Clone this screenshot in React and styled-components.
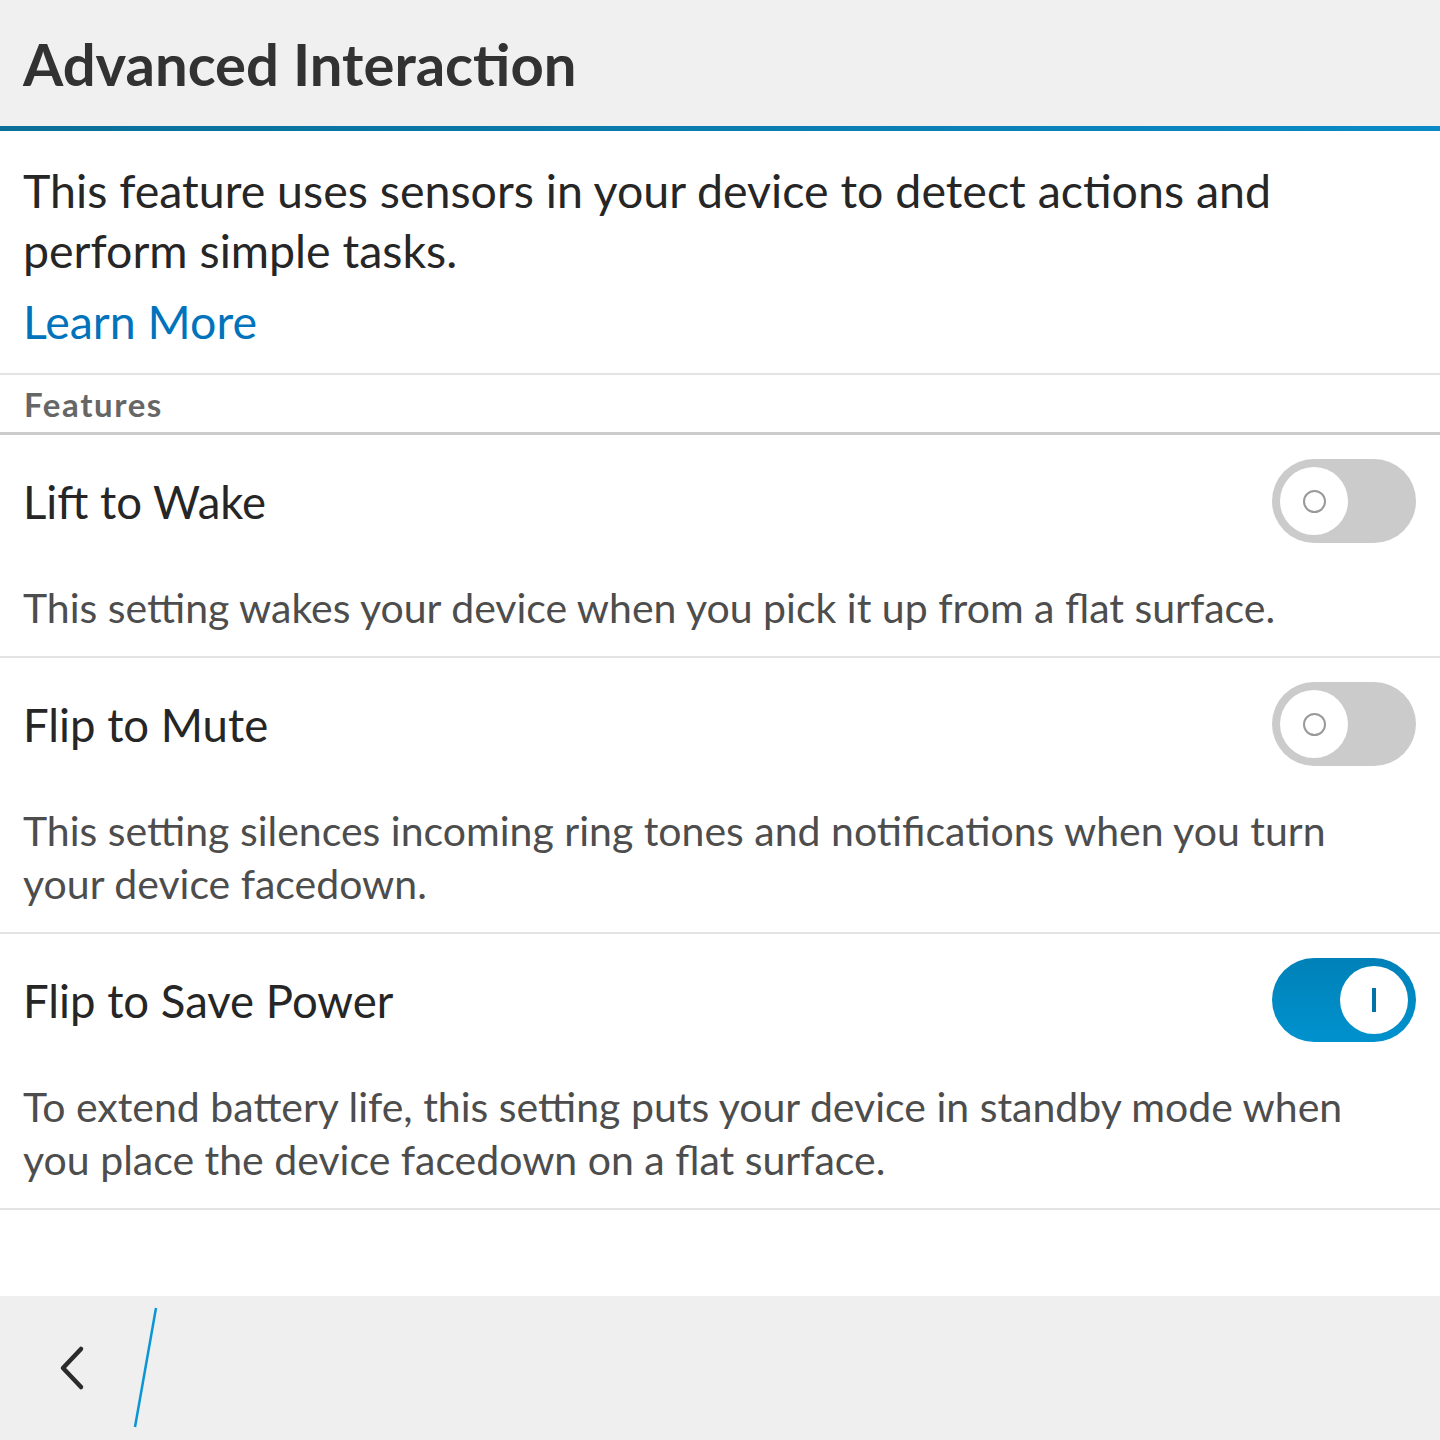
import React from "react";
import styled, { createGlobalStyle } from "styled-components";

const GlobalStyle = createGlobalStyle`
  html, body {
    margin: 0;
    padding: 0;
    background: #ffffff;
  }
  body {
    font-family: Lato, "Noto Sans", "Liberation Sans", sans-serif;
  }
`;

const Page = styled.div`
  width: 1440px;
  height: 1440px;
  display: flex;
  flex-direction: column;
  background: #ffffff;
  overflow: hidden;
`;

const TitleBar = styled.header`
  height: 126px;
  display: flex;
  align-items: center;
  padding: 0 23px;
  background: #f0f0f0;
  border-bottom: 5px solid transparent;
  border-image: linear-gradient(90deg, #0a6f98, #0a8ac6) 1;
`;

const Title = styled.h1`
  margin: 0;
  font-size: 58px;
  font-weight: 700;
  color: #323232;
`;

const Intro = styled.section`
  padding: 29px 23px 22px;
  border-bottom: 2px solid #e3e3e3;
`;

const IntroText = styled.p`
  margin: 0;
  font-size: 46.5px;
  line-height: 60px;
  color: #262626;
`;

const LearnMore = styled.a`
  display: block;
  margin-top: 11px;
  font-size: 46.5px;
  line-height: 60px;
  color: #0073bc;
  text-decoration: none;
`;

const SectionHeader = styled.div`
  height: 57px;
  display: flex;
  align-items: center;
  padding: 0 24px;
  font-size: 33px;
  font-weight: 700;
  letter-spacing: 1.6px;
  color: #666666;
  border-bottom: 3px solid #cccccc;
`;

const Item = styled.div`
  padding: 24px 24px 22px 23px;
  border-bottom: 2px solid #e3e3e3;
`;

const ItemRow = styled.div`
  display: flex;
  align-items: center;
  justify-content: space-between;
  height: 84px;
`;

const ItemTitle = styled.span`
  font-size: 45.5px;
  color: #262626;
`;

const ItemDesc = styled.p`
  margin: 38px 40px 0 0;
  font-size: 41px;
  line-height: 53px;
  color: #4d4d4d;
`;

const Track = styled.div`
  width: 144px;
  height: 84px;
  box-sizing: border-box;
  border-radius: 42px;
  padding: 8px;
  display: flex;
  justify-content: ${(p) => (p.on ? "flex-end" : "flex-start")};
  background: ${(p) =>
    p.on ? "linear-gradient(180deg, #0081b8, #0092ce)" : "#cbcbcb"};
`;

const Knob = styled.div`
  width: 68px;
  height: 68px;
  border-radius: 50%;
  background: #ffffff;
  display: flex;
  align-items: center;
  justify-content: center;
`;

const OffMark = styled.div`
  width: 19px;
  height: 19px;
  border-radius: 50%;
  border: 2.5px solid #999999;
`;

const OnMark = styled.div`
  width: 4px;
  height: 24px;
  background: #0074a8;
`;

const Spacer = styled.div`
  flex: 1;
`;

const BottomBar = styled.footer`
  height: 144px;
  flex-shrink: 0;
  background: #efefef;
  display: flex;
  align-items: center;
  padding-left: 56px;
  gap: 41px;
`;

function Toggle({ on }) {
  return (
    <Track on={on ? 1 : 0}>
      <Knob>{on ? <OnMark /> : <OffMark />}</Knob>
    </Track>
  );
}

const features = [
  {
    title: "Lift to Wake",
    desc: "This setting wakes your device when you pick it up from a flat surface.",
    on: false,
  },
  {
    title: "Flip to Mute",
    desc: "This setting silences incoming ring tones and notifications when you turn your device facedown.",
    on: false,
  },
  {
    title: "Flip to Save Power",
    desc: "To extend battery life, this setting puts your device in standby mode when you place the device facedown on a flat surface.",
    on: true,
  },
];

export default function App() {
  return (
    <>
      <GlobalStyle />
      <Page>
        <TitleBar>
          <Title>Advanced Interaction</Title>
        </TitleBar>
        <Intro>
          <IntroText>
            This feature uses sensors in your device to detect actions and
            perform simple tasks.
          </IntroText>
          <LearnMore href="#">Learn More</LearnMore>
        </Intro>
        <SectionHeader>Features</SectionHeader>
        {features.map((f) => (
          <Item key={f.title}>
            <ItemRow>
              <ItemTitle>{f.title}</ItemTitle>
              <Toggle on={f.on} />
            </ItemRow>
            <ItemDesc>{f.desc}</ItemDesc>
          </Item>
        ))}
        <Spacer />
        <BottomBar>
          <svg width="34" height="50" viewBox="0 0 34 50">
            <path
              d="M25 6 L7 25 L25 44"
              fill="none"
              stroke="#2b2b2b"
              strokeWidth="4.5"
              strokeLinecap="round"
              strokeLinejoin="round"
            />
          </svg>
          <svg width="30" height="122" viewBox="0 0 30 122">
            <line x1="25" y1="1" x2="4" y2="120" stroke="#0a95d4" strokeWidth="2.5" />
          </svg>
        </BottomBar>
      </Page>
    </>
  );
}
